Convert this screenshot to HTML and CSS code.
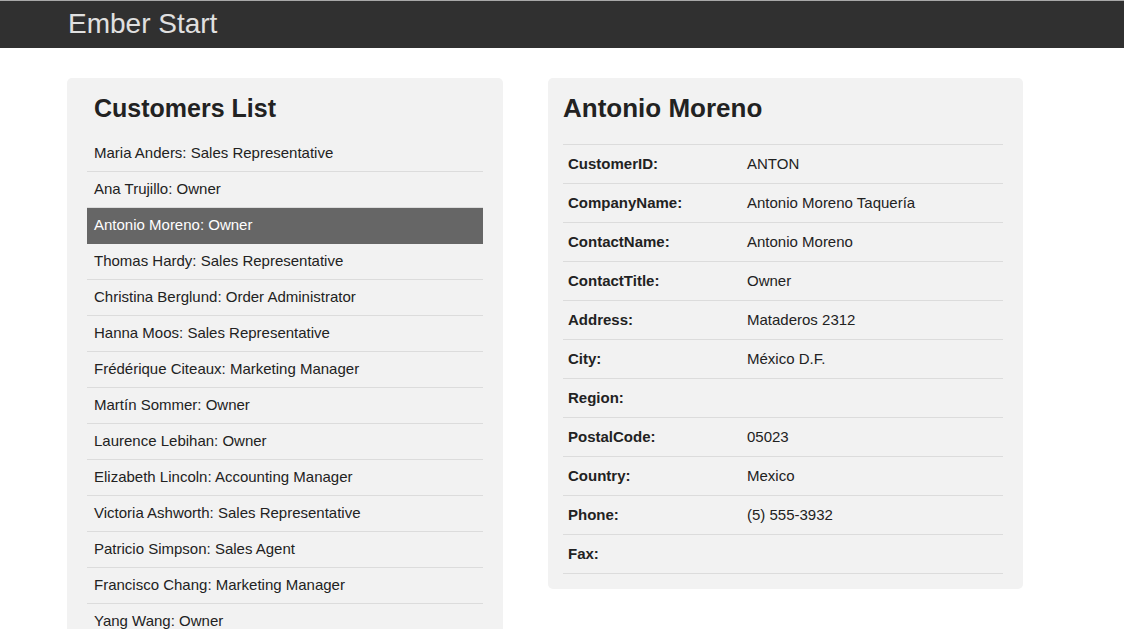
FILE: index.html
```html
<!DOCTYPE html>
<html>
<head>
<meta charset="utf-8">
<title>Ember Start</title>
<link rel="stylesheet" href="styles.css">
</head>
<body>
<header class="navbar">
  <span class="brand">Ember Start</span>
</header>
<main class="content">
  <section class="panel panel-list">
    <h2 class="list-title">Customers List</h2>
    <ul class="customers">
      <li>Maria Anders: Sales Representative</li>
      <li>Ana Trujillo: Owner</li>
      <li class="active">Antonio Moreno: Owner</li>
      <li>Thomas Hardy: Sales Representative</li>
      <li>Christina Berglund: Order Administrator</li>
      <li>Hanna Moos: Sales Representative</li>
      <li>Frédérique Citeaux: Marketing Manager</li>
      <li>Martín Sommer: Owner</li>
      <li>Laurence Lebihan: Owner</li>
      <li>Elizabeth Lincoln: Accounting Manager</li>
      <li>Victoria Ashworth: Sales Representative</li>
      <li>Patricio Simpson: Sales Agent</li>
      <li>Francisco Chang: Marketing Manager</li>
      <li>Yang Wang: Owner</li>
    </ul>
  </section>
  <section class="panel panel-detail">
    <h2 class="detail-title">Antonio Moreno</h2>
    <table class="details">
      <tr><th>CustomerID:</th><td>ANTON</td></tr>
      <tr><th>CompanyName:</th><td>Antonio Moreno Taquería</td></tr>
      <tr><th>ContactName:</th><td>Antonio Moreno</td></tr>
      <tr><th>ContactTitle:</th><td>Owner</td></tr>
      <tr><th>Address:</th><td>Mataderos 2312</td></tr>
      <tr><th>City:</th><td>México D.F.</td></tr>
      <tr><th>Region:</th><td></td></tr>
      <tr><th>PostalCode:</th><td>05023</td></tr>
      <tr><th>Country:</th><td>Mexico</td></tr>
      <tr><th>Phone:</th><td>(5) 555-3932</td></tr>
      <tr><th>Fax:</th><td></td></tr>
    </table>
  </section>
</main>
</body>
</html>
```
FILE: styles.css
```css
* { box-sizing: border-box; }
html, body {
  margin: 0;
  padding: 0;
  background: #fff;
  font-family: "Liberation Sans", Arial, sans-serif;
  color: #222;
  font-size: 15px;
}
.navbar {
  height: 48px;
  background: #303030;
  border-top: 1px solid #a8a8a8;
  padding-left: 68px;
  display: flex;
  align-items: center;
}
.brand {
  color: #e0e0e0;
  font-size: 28px;
  line-height: 32px;
  margin-top: -2px;
}
.content {
  display: flex;
  align-items: flex-start;
  gap: 45px;
  padding: 30px 0 0 67px;
  height: 581px;
  overflow: hidden;
}
.panel {
  background: #f2f2f2;
  border-radius: 5px;
}
.panel-list {
  width: 436px;
  padding: 15px 20px 20px 20px;
}
.panel-detail {
  width: 475px;
  padding: 15px 20px 15px 15px;
}
h2 {
  margin: 0;
  font-weight: bold;
  color: #222;
  line-height: 30px;
}
.list-title {
  font-size: 25px;
  padding-left: 7px;
  margin-bottom: 13px;
}
.detail-title {
  font-size: 26px;
  padding-left: 0;
  margin-bottom: 21px;
}
.customers {
  list-style: none;
  margin: 0;
  padding: 0;
}
.customers li {
  padding: 6px 7px 8px 7px;
  line-height: 21px;
  border-bottom: 1px solid #dcdcdc;
  color: #222;
}
.customers li.active {
  background: #666;
  color: #fff;
  border-bottom-color: #666;
}
.details {
  width: 100%;
  border-collapse: collapse;
  border-top: 1px solid #dcdcdc;
}
.details th, .details td {
  padding: 9px 5px;
  line-height: 20px;
  text-align: left;
  border-bottom: 1px solid #dcdcdc;
  height: 39px;
}
.details th {
  width: 179px;
  font-weight: bold;
}
.details td {
  font-weight: normal;
}
```
